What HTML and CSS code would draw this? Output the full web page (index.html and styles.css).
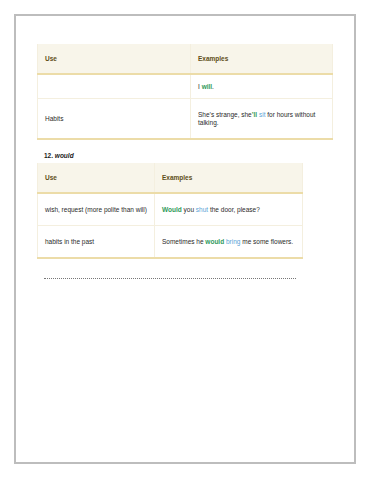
FILE: index.html
```html
<!DOCTYPE html>
<html>
<head>
<meta charset="utf-8">
<link rel="stylesheet" href="styles.css">
</head>
<body>
<div class="page">
  <table class="grid t1">
    <colgroup><col class="c1a"><col></colgroup>
    <thead>
      <tr class="head"><th>Use</th><th>Examples</th></tr>
    </thead>
    <tbody>
      <tr class="r1"><td></td><td>I <b class="g">will</b>.</td></tr>
      <tr class="r2 last"><td>Habits</td><td>She’s strange, she<b class="g">’ll</b> <span class="b">sit</span> for hours without talking.</td></tr>
    </tbody>
  </table>
  <p class="title">12. <i>would</i></p>
  <table class="grid t2">
    <colgroup><col class="c2a"><col></colgroup>
    <thead>
      <tr class="head"><th>Use</th><th>Examples</th></tr>
    </thead>
    <tbody>
      <tr class="r3"><td>wish, request (more polite than will)</td><td><b class="g">Would</b> you <span class="b">shut</span> the door, please?</td></tr>
      <tr class="r3 last"><td>habits in the past</td><td>Sometimes he <b class="g">would</b> <span class="b">bring</span> me some flowers.</td></tr>
    </tbody>
  </table>
  <div class="dots"></div>
</div>
</body>
</html>
```
FILE: styles.css
```css
html, body {
  margin: 0;
  padding: 0;
  background: #ffffff;
}
body {
  font-family: "Liberation Sans", Arial, sans-serif;
  font-size: 6.5px;
  color: #2a2a2a;
}
.page {
  margin: 14px 0 0 14px;
  border: 2px solid #bdbdbd;
  padding: 28px 0 0 21px;
  box-sizing: content-box;
  height: 418px;
  width: 317px;
  background: #fff;
}
.grid {
  border-collapse: collapse;
  table-layout: fixed;
}
.t1 { width: 296px; }
.t2 { width: 266px; }
.c1a { width: 153px; }
.c2a { width: 117px; }
.grid th, .grid td {
  padding: 0 6px 0 7px;
  text-align: left;
  vertical-align: middle;
  border-left: 1px solid #f4efdf;
  border-right: 1px solid #f4efdf;
  line-height: 8px;
}
.grid th {
  font-weight: bold;
  color: #5e4d17;
  background: #f8f5ea;
  height: 29px;
  border-bottom: 2px solid #ecdca8;
}
.grid td {
  border-bottom: 1px solid #f4efdf;
}
.r1 td { height: 23px; }
.r2 td { height: 39px; }
.r3 td { height: 31px; }
.grid tr.last td { border-bottom: 2px solid #ecdca8; }
.t2 th { height: 29px; }
.g { color: #2f9a5a; font-weight: bold; }
.b { color: #5aa3d6; font-weight: normal; }
.title {
  margin: 0;
  padding: 12px 0 0 7px;
  height: 11px;
  font-weight: bold;
  line-height: 8px;
  color: #1a1a1a;
}
.dots {
  margin: 19px 0 0 7px;
  width: 252px;
  border-top: 1px dotted #777;
}
```
